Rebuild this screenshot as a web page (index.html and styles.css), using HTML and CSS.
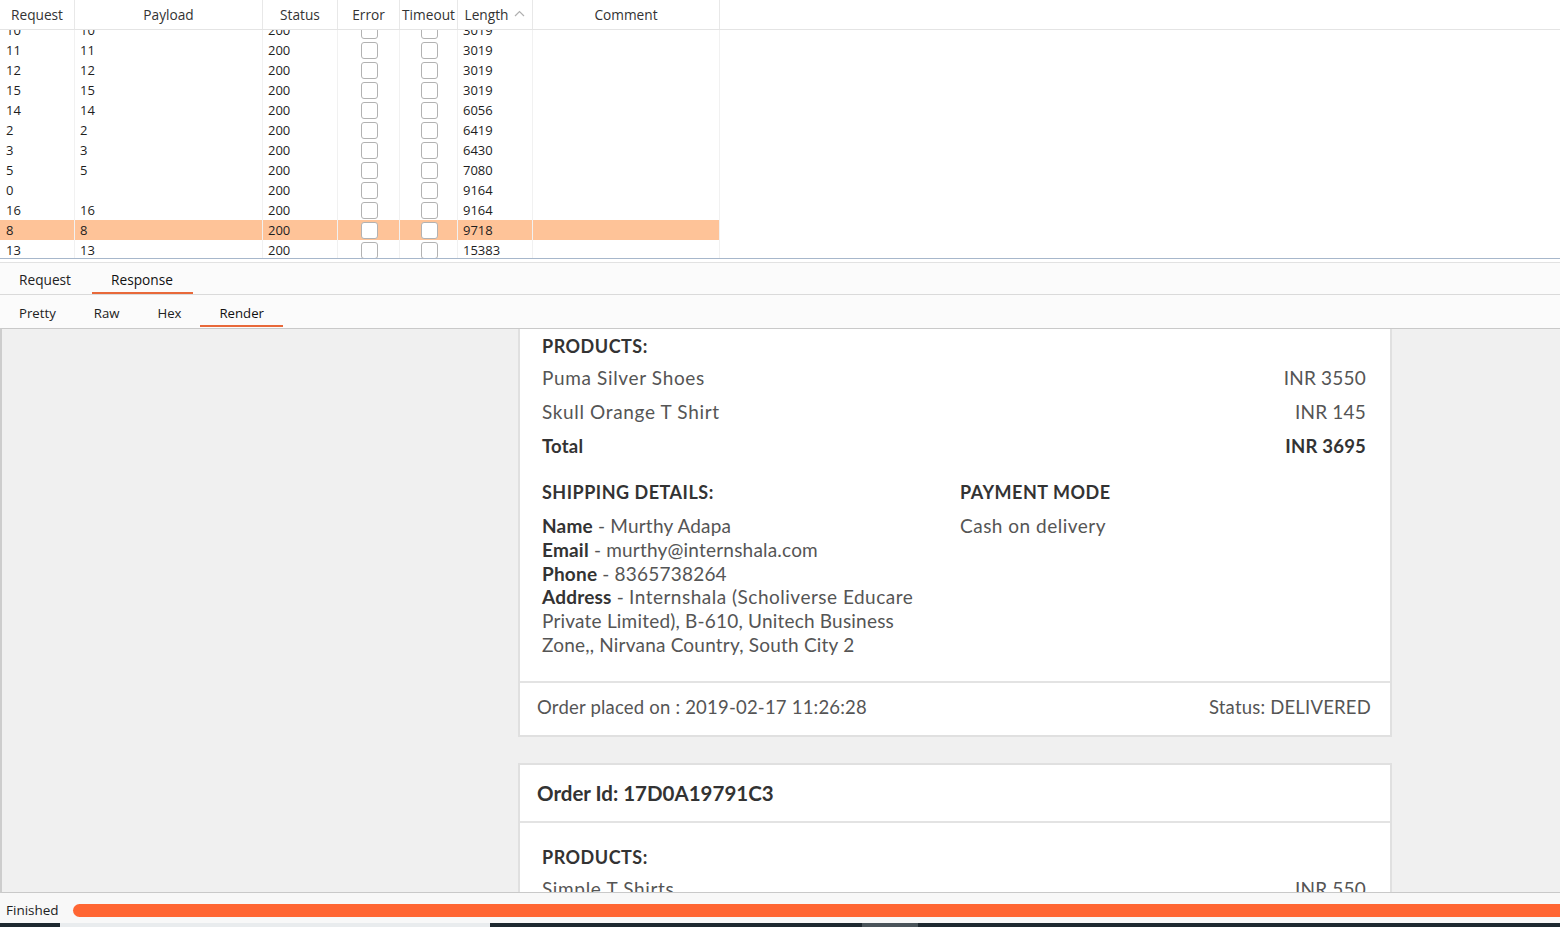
FILE: index.html
```html
<!DOCTYPE html>
<html lang="en">
<head>
<meta charset="utf-8">
<title>Intruder results</title>
<link rel="stylesheet" href="styles.css">
</head>
<body>
<div class="app">
  <section class="results">
    <div class="thead">
      <div class="th">Request</div>
      <div class="th">Payload</div>
      <div class="th">Status</div>
      <div class="th">Error</div>
      <div class="th">Timeout</div>
      <div class="th">Length <svg class="sort" width="11" height="7" viewBox="0 0 11 7"><polyline points="1,6 5.5,1.5 10,6" fill="none" stroke="#b0b0b0" stroke-width="1.2"/></svg></div>
      <div class="th">Comment</div>
      <div class="th th-rest"></div>
    </div>
    <div class="tbody">
      <div class="rows">
        <div class="tr"><div class="td">10</div><div class="td">10</div><div class="td">200</div><div class="td td-cb"><span class="cb"></span></div><div class="td td-cb"><span class="cb"></span></div><div class="td">3019</div><div class="td"></div><div class="td td-rest"></div></div>
        <div class="tr"><div class="td">11</div><div class="td">11</div><div class="td">200</div><div class="td td-cb"><span class="cb"></span></div><div class="td td-cb"><span class="cb"></span></div><div class="td">3019</div><div class="td"></div><div class="td td-rest"></div></div>
        <div class="tr"><div class="td">12</div><div class="td">12</div><div class="td">200</div><div class="td td-cb"><span class="cb"></span></div><div class="td td-cb"><span class="cb"></span></div><div class="td">3019</div><div class="td"></div><div class="td td-rest"></div></div>
        <div class="tr"><div class="td">15</div><div class="td">15</div><div class="td">200</div><div class="td td-cb"><span class="cb"></span></div><div class="td td-cb"><span class="cb"></span></div><div class="td">3019</div><div class="td"></div><div class="td td-rest"></div></div>
        <div class="tr"><div class="td">14</div><div class="td">14</div><div class="td">200</div><div class="td td-cb"><span class="cb"></span></div><div class="td td-cb"><span class="cb"></span></div><div class="td">6056</div><div class="td"></div><div class="td td-rest"></div></div>
        <div class="tr"><div class="td">2</div><div class="td">2</div><div class="td">200</div><div class="td td-cb"><span class="cb"></span></div><div class="td td-cb"><span class="cb"></span></div><div class="td">6419</div><div class="td"></div><div class="td td-rest"></div></div>
        <div class="tr"><div class="td">3</div><div class="td">3</div><div class="td">200</div><div class="td td-cb"><span class="cb"></span></div><div class="td td-cb"><span class="cb"></span></div><div class="td">6430</div><div class="td"></div><div class="td td-rest"></div></div>
        <div class="tr"><div class="td">5</div><div class="td">5</div><div class="td">200</div><div class="td td-cb"><span class="cb"></span></div><div class="td td-cb"><span class="cb"></span></div><div class="td">7080</div><div class="td"></div><div class="td td-rest"></div></div>
        <div class="tr"><div class="td">0</div><div class="td"></div><div class="td">200</div><div class="td td-cb"><span class="cb"></span></div><div class="td td-cb"><span class="cb"></span></div><div class="td">9164</div><div class="td"></div><div class="td td-rest"></div></div>
        <div class="tr"><div class="td">16</div><div class="td">16</div><div class="td">200</div><div class="td td-cb"><span class="cb"></span></div><div class="td td-cb"><span class="cb"></span></div><div class="td">9164</div><div class="td"></div><div class="td td-rest"></div></div>
        <div class="tr tr-sel"><div class="td">8</div><div class="td">8</div><div class="td">200</div><div class="td td-cb"><span class="cb"></span></div><div class="td td-cb"><span class="cb"></span></div><div class="td">9718</div><div class="td"></div><div class="td td-rest"></div></div>
        <div class="tr"><div class="td">13</div><div class="td">13</div><div class="td">200</div><div class="td td-cb"><span class="cb"></span></div><div class="td td-cb"><span class="cb"></span></div><div class="td">15383</div><div class="td"></div><div class="td td-rest"></div></div>
      </div>
    </div>
  </section>

  <nav class="tabs tabs-main">
    <div class="tab">Request</div>
    <div class="tab tab-active">Response</div>
  </nav>
  <nav class="tabs tabs-sub">
    <div class="tab">Pretty</div>
    <div class="tab">Raw</div>
    <div class="tab">Hex</div>
    <div class="tab tab-active">Render</div>
  </nav>

  <main class="render">
    <div class="orders">
      <article class="card card-cut">
        <div class="card-body">
          <h4 class="label">PRODUCTS:</h4>
          <div class="line"><span class="item">Puma Silver Shoes</span><span>INR 3550</span></div>
          <div class="line"><span class="item">Skull Orange T Shirt</span><span>INR 145</span></div>
          <div class="line line-total"><span>Total</span><span>INR 3695</span></div>
          <div class="details">
            <div class="col">
              <h4 class="label">SHIPPING DETAILS:</h4>
              <p class="info">
                <b>Name</b> - Murthy Adapa<br>
                <b>Email</b> - murthy@internshala.com<br>
                <b>Phone</b> - 8365738264<br>
                <b>Address</b> - <span class="wide">Internshala (Scholiverse Educare</span><br>Private Limited), B-610, Unitech Business<br>Zone,, Nirvana Country, South City 2
              </p>
            </div>
            <div class="col">
              <h4 class="label">PAYMENT MODE</h4>
              <p class="info info-wide">Cash on delivery</p>
            </div>
          </div>
        </div>
        <div class="card-foot">
          <span>Order placed on : 2019-02-17 11:26:28</span>
          <span>Status: DELIVERED</span>
        </div>
      </article>

      <article class="card">
        <div class="card-head">Order Id: 17D0A19791C3</div>
        <div class="card-body">
          <h4 class="label">PRODUCTS:</h4>
          <div class="line"><span class="item">Simple T Shirts</span><span>INR 550</span></div>
          <div class="line"><span class="item">Puma Silver Shoes</span><span>INR 3550</span></div>
        </div>
      </article>
    </div>
  </main>

  <footer class="status">
    <span class="status-text">Finished</span>
    <div class="progress"></div>
  </footer>
  <div class="taskbar">
    <span class="tb tb-dark tb-a"></span>
    <span class="tb tb-light tb-b"></span>
    <span class="tb tb-dark tb-c"></span>
    <span class="tb tb-gray tb-d"></span>
    <span class="tb tb-dark tb-e"></span>
  </div>
</div>
</body>
</html>
```

FILE: styles.css
```css
* { box-sizing: border-box; margin: 0; padding: 0; }
html, body { width: 1560px; height: 927px; overflow: hidden; }
body {
  font-family: "Open Sans", "Noto Sans", sans-serif;
  font-size: 13px;
  color: #222;
  background: #fff;
}
.app { display: flex; flex-direction: column; height: 927px; }

/* ---------- results table ---------- */
.results { flex: none; height: 262px; background: #fff; padding-bottom: 3px; }
.thead, .tr {
  display: grid;
  grid-template-columns: 75px 188px 75px 62px 58px 75px 187px 1fr;
}
.thead { height: 30px; border-bottom: 1px solid #e4e4e4; }
.th {
  display: flex; align-items: center; justify-content: center; gap: 6px;
  border-right: 1px solid #e8e8e8;
  color: #333; font-size: 13.7px; white-space: nowrap;
}
.th-rest { border-right: 0; }
.sort { margin-top: -2px; }
.tbody { height: 229px; overflow: hidden; border-bottom: 1px solid #a7b7cb; }
.rows { margin-top: -10px; }
.tr { height: 20px; }
.td {
  line-height: 20px; padding-left: 5px; white-space: nowrap;
  border-right: 1px solid #f1f1f1; color: #1e1e1e; font-size: 13px;
}
.td:first-child { padding-left: 6px; }
.td-rest { border-right: 0; }
.td-cb { display: flex; align-items: center; justify-content: center; padding-left: 1px; }
.cb {
  width: 17px; height: 17px; border: 1px solid #b2b2b2; border-radius: 3px; background: #fff;
}
.tr-sel .td:not(.td-rest) { background: #fec398; }

/* ---------- tabs ---------- */
.tabs {
  flex: none; display: flex; height: 33px; background: #fbfbfb;
}
.tabs-main { border-top: 1px solid #e2e2e2; border-bottom: 1px solid #dadada; padding-top: 2px; }
.tabs-sub { padding-top: 3px; }
.tab {
  position: relative; display: flex; align-items: center;
  padding: 0 19px; color: #222; font-size: 13.7px;
}
.tabs-sub .tab { font-size: 13.2px; }
.tabs-main .tab { padding: 0 20px 0 19px; }
.tabs-main .tab:first-child { padding-right: 21px; }
.tab-active { color: #111; }
.tab-active::after {
  content: ""; position: absolute; left: 0; right: 0; bottom: 0;
  height: 2px; background: #e8693a;
}
.tabs-sub .tab-active::after { bottom: 1px; }

/* ---------- render area ---------- */
.render {
  flex: 1; overflow: hidden; background: #f0f0f0;
  border-top: 1px solid #c9c9c9; border-left: 2px solid #cdcdcd; border-bottom: 1px solid #c9c9c9;
  font-family: "Lato", "Open Sans", sans-serif; font-size: 19px; letter-spacing: 0.2px; color: #555;
}
.orders { margin-left: 516px; width: 874px; display: flex; flex-direction: column; gap: 26px; }
.card { background: #fff; border: 2px solid #e0e0e0; }
.card-cut { border-top: 0; }
.card-head {
  padding: 14px 20px 14px 17px; font-size: 20.5px; font-weight: 700; color: #333; line-height: 28px;
  letter-spacing: 0;
  border-bottom: 2px solid #e3e3e3;
}
.card-body { padding: 22px 24px 24px 22px; }
.card-cut .card-body { padding-top: 5px; }
.label { font-size: 18px; font-weight: 700; color: #333; line-height: 24px; letter-spacing: 0.5px; }
.line {
  display: flex; justify-content: space-between; line-height: 24px; margin-top: 10px;
}
.label + .line { margin-top: 8px; }
.item { letter-spacing: 0.65px; }
.line-total { font-weight: 700; color: #333; font-size: 18.5px; }
.details {
  display: grid; grid-template-columns: 406px 1fr; column-gap: 12px; margin-top: 22px;
}
.info { margin-top: 10px; line-height: 23.8px; white-space: nowrap; }
.info b { color: #333; }
.wide { letter-spacing: 0.5px; }
.info-wide { letter-spacing: 0.5px; }
.card-foot {
  display: flex; justify-content: space-between;
  padding: 12px 19px 16px 17px; line-height: 24px; font-size: 18.5px;
  border-top: 2px solid #e3e3e3;
}

/* ---------- status bar ---------- */
.status {
  flex: none; height: 30px; display: flex; align-items: center; background: #f8f8f8;
}
.status-text { padding-left: 6px; width: 73px; color: #222; font-size: 13.5px; padding-top: 3px; }
.progress {
  flex: 1; height: 13px; background: #ff6633; border-radius: 7px 0 0 7px; margin-top: 4px;
}
.taskbar { flex: none; height: 4px; display: flex; }
.tb { display: block; height: 100%; }
.tb-dark { background: #1e2930; }
.tb-light { background: #e9ecee; }
.tb-gray { background: #4a545a; }
.tb-a { width: 60px; }
.tb-b { width: 430px; }
.tb-c { width: 372px; }
.tb-d { width: 56px; }
.tb-e { flex: 1; }
```
